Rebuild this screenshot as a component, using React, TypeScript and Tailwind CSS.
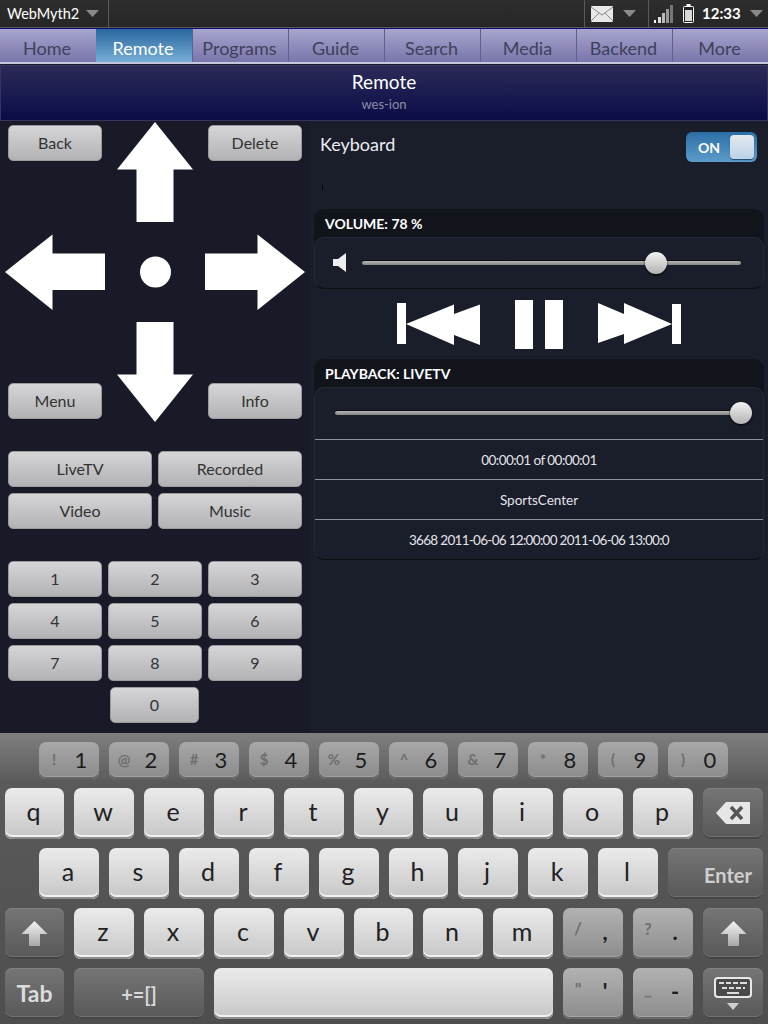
import type { ReactNode } from "react";

const navItems = ["Home", "Remote", "Programs", "Guide", "Search", "Media", "Backend", "More"];

const lightKey = "bg-linear-to-b from-[#ebebeb] to-[#c6c6c6] shadow-[inset_0_-2px_0_#8c8c8c,inset_0_-4px_0_#f2f2f2] text-[#222]";
const grayKey = "bg-linear-to-b from-[#b2b2b2] to-[#8c8c8c] shadow-[inset_0_-2px_0_#686868,inset_0_-3px_0_#a4a4a4] text-[#222]";
const darkKey = "bg-linear-to-b from-[#757575] to-[#585858] shadow-[inset_0_1px_0_#808080,inset_0_-2px_0_#454545,inset_0_-3px_0_#707070] text-[#ddd]";

function Caret() {
  return (
    <svg width="13" height="7" viewBox="0 0 13 7" className="shrink-0">
      <path d="M0 0h13L6.500 7z" fill="#8a8a8a" />
    </svg>
  );
}

function PanelButton({ label, className }: { label: string; className: string }) {
  return (
    <div className={`h-9 flex items-center justify-center rounded-[5px] border border-[#9a9a9c] bg-linear-to-b from-[#d6d6d8] to-[#b2b2b4] text-[16px] text-[#333] ${className}`}>
      {label}
    </div>
  );
}

function Slider({ pct, className }: { pct: number; className: string }) {
  return (
    <div className={`relative h-[5px] rounded-full border-t border-[#0c0d12] bg-linear-to-b from-[#b4b4b4] to-[#858585] ${className}`}>
      <div
        className="absolute top-1/2 w-[22px] h-[22px] -translate-x-1/2 -translate-y-1/2 rounded-full bg-linear-to-b from-[#f2f2f2] to-[#b4b4b4] shadow-[0_1px_2px_#000]"
        style={{ left: `${pct}%` }}
      />
    </div>
  );
}

function Group({ title, children }: { title: string; children: ReactNode }) {
  return (
    <div className="w-[450px] ml-1 rounded-[10px] bg-[#12141c]">
      <div className="h-7 pl-[11px] flex items-center text-[14px] font-bold text-white">{title}</div>
      <div className="rounded-[10px] border border-[#262934] border-b-[#0c0d13] bg-[#1a1d2a]">{children}</div>
    </div>
  );
}

function InfoRow({ text, className = "" }: { text: string; className?: string }) {
  return (
    <div className={`h-10 flex items-center justify-center pt-[2px] border-t border-[#8f9097] text-[13.500px] text-[#e4e4e8] ${className}`}>{text}</div>
  );
}

function Key({ label, className, width = "w-[60px]" }: { label: ReactNode; className: string; width?: string }) {
  return (
    <div className={`${width} h-[51px] shrink-0 flex items-center justify-center rounded-[7px] ${className}`}>{label}</div>
  );
}

function Letter({ k, width }: { k: string; width?: string }) {
  return <Key label={<span className="text-[25px] leading-none -mt-[4px] -ml-[2px]">{k}</span>} className={lightKey} width={width} />;
}

function Sym({ small, big }: { small: string; big: string }) {
  return (
    <div className={`w-[60px] h-[51px] shrink-0 flex items-center rounded-[7px] ${grayKey}`}>
      <span className="w-[30px] text-center text-[17px] font-bold text-[#6f6f6f] -mt-[10px]">{small}</span>
      <span className="w-[24px] text-center text-[22px] font-bold text-[#1c1c1c] -mt-[4px]">{big}</span>
    </div>
  );
}

function NumKey({ small, big, width = "w-[60px]" }: { small: string; big: string; width?: string }) {
  return (
    <div className={`${width} h-[37px] shrink-0 flex items-center rounded-[7px] bg-linear-to-b from-[#a8a8a8] to-[#8a8a8a] shadow-[inset_0_-2px_0_#666,inset_0_-3px_0_#a0a0a0]`}>
      <span className="w-[30px] text-center text-[15px] font-bold text-[#6e6e6e] -mt-[2px]">{small}</span>
      <span className="w-[24px] text-center text-[22px] text-[#1c1c1c] -mt-[2px]">{big}</span>
    </div>
  );
}

function ShiftIcon() {
  return (
    <svg width="27" height="27" viewBox="0 0 27 27">
      <defs>
        <linearGradient id="shiftFill" x1="0" y1="0" x2="0" y2="1">
          <stop offset="0" stopColor="#f4f4f4" />
          <stop offset="1" stopColor="#a8a8a8" />
        </linearGradient>
      </defs>
      <path d="M13.500 1 26.500 14H19v12H8V14H.5z" fill="url(#shiftFill)" />
    </svg>
  );
}

function KeyboardIcon() {
  return (
    <svg width="38" height="33" viewBox="0 0 38 33">
      <rect x="1" y="1" width="36" height="19" rx="3" fill="#4a4a4a" stroke="#e8e8e8" strokeWidth="2" />
      <path d="M5 5h5v2H5zM12 5h5v2h-5zM19 5h5v2h-5zM26 5h7v2h-7z" fill="#dcdcdc" />
      <path d="M8 10h5v2H8zM15 10h5v2h-5zM22 10h5v2h-5zM29 10h2v2h-2z" fill="#dcdcdc" />
      <path d="M13 15h12v2H13z" fill="#dcdcdc" />
      <path d="M13 26h12l-6 7z" fill="#cfcfcf" />
    </svg>
  );
}

export default function App() {
  return (
    <div className="w-[768px] h-[1024px] overflow-hidden flex flex-col bg-[#191c29] font-['Lato','Open_Sans',sans-serif]">
      {/* status bar */}
      <div className="h-[28px] shrink-0 flex items-center bg-linear-to-b from-[#2e2e2e] to-[#262626] border-b border-[#5a5a5a] text-white">
        <div className="w-[109px] h-full flex items-center justify-between pl-[7px] pr-[9px] border-r border-[#5a5a5a]">
          <span className="text-[14.500px]">WebMyth2</span>
          <Caret />
        </div>
        <div className="flex-1" />
        <div className="w-[64px] h-full flex items-center gap-[10px] pl-[6px] border-l border-[#5a5a5a]">
          <svg width="22" height="16" viewBox="0 0 22 16">
            <rect width="22" height="16" rx="1" fill="#e8e8e8" />
            <path d="M0 1 11 9 22 1M0 15l8-8M22 15l-8-8" fill="none" stroke="#8a8a8a" strokeWidth="1" />
          </svg>
          <Caret />
        </div>
        <div className="w-[120px] h-full flex items-center pl-[5px] border-l border-[#5a5a5a]">
          <svg width="20" height="18" viewBox="0 0 20 18" className="mr-[9px]">
            <rect x="0" y="15" width="2" height="3" fill="#fff" />
            <rect x="4" y="12" width="3" height="6" fill="#ddd" />
            <rect x="8" y="8" width="3" height="10" fill="#bbb" />
            <rect x="12" y="4" width="3" height="14" fill="#999" />
            <rect x="16" y="0" width="3" height="18" fill="#777" />
          </svg>
          <svg width="11" height="19" viewBox="0 0 11 19" className="mr-[8px]">
            <rect x="3.500" y="0" width="4" height="2" fill="#fff" />
            <rect x="0.500" y="2.500" width="10" height="16" rx="1" fill="#222" stroke="#fff" />
            <rect x="2" y="6" width="7" height="11" fill="#d8d8d8" />
          </svg>
          <span className="text-[15px] font-bold mr-[9px]">12:33</span>
          <Caret />
        </div>
      </div>

      {/* nav tabs */}
      <div className="h-[36px] shrink-0 grid grid-cols-8 border-t border-[#0b0b70] border-b-2 border-b-[#c6c5de] bg-linear-to-b from-[#a8a5ce] to-[#7876aa]">
        {navItems.map((item, i) => (
          <div
            key={item}
            className={
              item === "Remote"
                ? "flex items-center justify-center pt-[5px] pr-[2px] text-[18px] text-white bg-linear-to-b from-[#28679f] to-[#76aed6]"
                : i === 0
                ? "flex items-center justify-center pt-[5px] pr-[2px] text-[18px] text-[#40405a]"
                : "flex items-center justify-center pt-[5px] pr-[2px] text-[18px] text-[#40405a] border-l border-[#62608f]"
            }
          >
            {item}
          </div>
        ))}
      </div>

      {/* title */}
      <div className="h-[56px] shrink-0 mt-px flex flex-col items-center border border-[#37355f] bg-linear-to-b from-[#2c2a58] to-[#0b0b47]">
        <div className="mt-[4px] text-[19px] leading-[24px] text-white">Remote</div>
        <div className="mt-[1px] text-[13px] leading-[18px] text-[#8d8da6]">wes-ion</div>
      </div>

      {/* body */}
      <div className="h-[612px] shrink-0 flex">
        <div className="w-[310px] shrink-0 bg-[#181b27]">
          <div className="grid h-[302px]">
            <svg width="310" height="302" viewBox="0 121 310 302" className="col-start-1 row-start-1">
              <path d="M155 122 193 169.500H173.500V222H136.500V169.500H117z" fill="#fff" />
              <path d="M5 272 52.500 234.500V253.500H105V290H52.500V310z" fill="#fff" />
              <path d="M305 272 257.500 234.500V253.500H205V290H257.500V310z" fill="#fff" />
              <path d="M155 422 193 374.500H173.500V322H136.500V374.500H117z" fill="#fff" />
              <circle cx="155.500" cy="272" r="15.500" fill="#fff" />
            </svg>
            <div className="col-start-1 row-start-1 flex flex-col justify-between py-1 px-2">
              <div className="flex justify-between">
                <PanelButton label="Back" className="w-[94px]" />
                <PanelButton label="Delete" className="w-[94px]" />
              </div>
              <div className="flex justify-between">
                <PanelButton label="Menu" className="w-[94px]" />
                <PanelButton label="Info" className="w-[94px]" />
              </div>
            </div>
          </div>

          <div className="mt-[28px] px-2 grid grid-cols-2 gap-x-[6px] gap-y-[6px]">
            {["LiveTV", "Recorded", "Video", "Music"].map((label) => (
              <PanelButton key={label} label={label} className="" />
            ))}
          </div>

          <div className="mt-[32px] px-2 grid grid-cols-3 gap-[6px]">
            {["1", "2", "3", "4", "5", "6", "7", "8", "9"].map((label) => (
              <PanelButton key={label} label={label} className="" />
            ))}
          </div>
          <div className="mt-[6px] pl-[110px]">
            <PanelButton label="0" className="w-[89px]" />
          </div>
        </div>

        <div className="flex-1 bg-[#1a1d2a]">
          <div className="h-[42px] mt-[10px] flex items-start justify-between pl-[10px] pr-[11px]">
            <span className="text-[18px] leading-[26px] text-[#ececf0]">Keyboard</span>
            <div className="w-[71px] h-[30px] mt-px flex items-center justify-between pl-[12px] pr-[3px] rounded-[6px] bg-linear-to-b from-[#2b6ea6] to-[#5c9ccb]">
              <span className="text-[14px] font-bold text-white">ON</span>
              <div className="w-[24px] h-[24px] rounded-[4px] bg-linear-to-b from-[#e4e9ef] to-[#bcd2e6] shadow-[0_1px_1px_#1d4a70]" />
            </div>
          </div>
          <div className="w-[1px] h-[5px] ml-3 mt-[12px] bg-black" />
          <div className="mt-[19px]">
            <Group title="VOLUME: 78 %">
              <div className="h-[50px] flex items-center pl-[18px] pb-[2px]">
                <svg width="14" height="19" viewBox="0 0 14 19" className="shrink-0">
                  <path d="M0 6h5L13 0V19L5 13H0z" fill="#eee" />
                </svg>
                <Slider pct={77.6} className="w-[379px] ml-[15px]" />
              </div>
            </Group>
          </div>

          <svg width="458" height="70" viewBox="310 289 458 70" className="block">
            <path d="M397 303h9v41h-9zM406 324 454 304.500V345z" fill="#fff" />
            <path d="M454 314 480 304.500V345L454 335z" fill="#fff" />
            <rect x="515" y="300" width="18" height="49" fill="#fff" />
            <rect x="545" y="300" width="18" height="49" fill="#fff" />
            <path d="M598 303 624 314V303L672 324 624 344V334L598 343zM672 304h9v40h-9z" fill="#fff" />
          </svg>

          <Group title="PLAYBACK: LIVETV">
            <div className="h-[51px] flex items-center pl-[20px] pb-[3px]">
              <Slider pct={100} className="w-[406px]" />
            </div>
            <InfoRow text="00:00:01 of 00:00:01" className="tracking-[-0.55px]" />
            <InfoRow text="SportsCenter" />
            <InfoRow text="3668 2011-06-06 12:00:00 2011-06-06 13:00:0" className="tracking-[-0.7px]" />
          </Group>
        </div>
      </div>

      {/* keyboard */}
      <div className="flex-1 flex flex-col gap-[9px] pt-[9px] bg-[linear-gradient(#7f7f7f,#5a5a5a_50px,#4e4e4e)]">
        <div className="flex gap-[10px] pl-[39px]">
          <NumKey small="!" big="1" />
          <NumKey small="@" big="2" />
          <NumKey small="#" big="3" />
          <NumKey small="$" big="4" />
          <NumKey small="%" big="5" />
          <NumKey small="^" big="6" width="w-[59px]" />
          <NumKey small="&" big="7" />
          <NumKey small="*" big="8" />
          <NumKey small="(" big="9" />
          <NumKey small=")" big="0" />
        </div>

        <div className="flex gap-[10px] pl-[5px]">
          <Letter k="q" width="w-[59px]" />
          {["w", "e", "r", "t"].map((k) => <Letter key={k} k={k} />)}
          <Letter k="y" width="w-[59px]" />
          {["u", "i", "o", "p"].map((k) => <Letter key={k} k={k} />)}
          <Key
            className={darkKey}
            label={
              <svg width="34" height="22" viewBox="0 0 34 22" className="-mt-[2px]">
                <path d="M10 0H34V22H10L0 11z" fill="#e6e6e6" />
                <path d="M15 5 26 17M26 5 15 17" stroke="#555" strokeWidth="3.500" />
              </svg>
            }
          />
        </div>

        <div className="flex gap-[10px] pl-[39px]">
          {["a", "s", "d", "f", "g"].map((k) => <Letter key={k} k={k} />)}
          <Letter k="h" width="w-[59px]" />
          {["j", "k", "l"].map((k) => <Letter key={k} k={k} />)}
          <div className={`w-[95px] h-[51px] shrink-0 flex items-end justify-end pr-[11px] pb-[9px] rounded-[7px] ${darkKey}`}>
            <span className="text-[20px] font-bold text-[#cfcfcf]">Enter</span>
          </div>
        </div>

        <div className="flex gap-[10px] pl-[5px]">
          <Key className={darkKey} width="w-[59px]" label={<ShiftIcon />} />
          {["z", "x", "c", "v"].map((k) => <Letter key={k} k={k} />)}
          <Letter k="b" width="w-[59px]" />
          {["n", "m"].map((k) => <Letter key={k} k={k} />)}
          <Sym small="/" big="," />
          <Sym small="?" big="." />
          <Key className={darkKey} label={<ShiftIcon />} />
        </div>

        <div className="flex gap-[10px] pl-[5px]">
          <Key className={darkKey} width="w-[59px]" label={<span className="text-[23px] font-bold text-[#dcdcdc]">Tab</span>} />
          <Key className={darkKey} width="w-[130px]" label={<span className="text-[20px] font-bold text-[#d8d8d8]">+=[]</span>} />
          <Key className={lightKey} width="w-[339px]" label="" />
          <Sym small={'"'} big="'" />
          <Sym small="_" big="-" />
          <Key className={darkKey} label={<KeyboardIcon />} />
        </div>
      </div>
    </div>
  );
}
